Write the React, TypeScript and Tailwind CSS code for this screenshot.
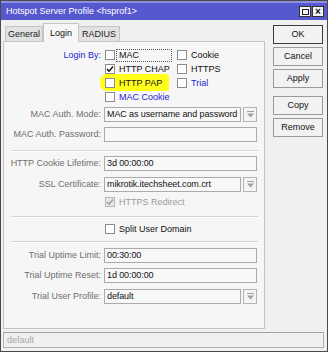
import React from "react";

const font = { fontFamily: '"Liberation Sans", Arial, sans-serif' };

const DropIcon = () => (
  <svg width="7" height="7" viewBox="0 0 7 7">
    <rect x="0" y="0" width="7" height="1" fill="#a0a0a0" />
    <polygon points="0,2.5 7,2.5 3.5,6.5" fill="#a0a0a0" />
  </svg>
);

const Check = ({ color = "#111" }: { color?: string }) => (
  <svg width="8" height="8" viewBox="0 0 8 8">
    <polyline points="1,4 3,6.2 7,1.5" fill="none" stroke={color} strokeWidth="1.4" />
  </svg>
);

const Box = ({ checked, disabled }: { checked?: boolean; disabled?: boolean }) => (
  <span
    className={
      "w-[10px] h-[10px] flex items-center justify-center border shrink-0 " +
      (disabled ? "bg-[#e8e8e8] border-[#b8b8b8]" : "bg-white border-[#8c8c8c]")
    }
  >
    {checked && <Check color={disabled ? "#9a9a9a" : "#111"} />}
  </span>
);

const CheckItem = ({
  label,
  checked,
  blue,
  focus,
}: {
  label: string;
  checked?: boolean;
  blue?: boolean;
  focus?: boolean;
}) => (
  <div className="flex items-center">
    <Box checked={checked} />
    <span
      className={
        "ml-[1px] w-[56px] h-[13px] pl-[2px] flex items-center whitespace-nowrap border " +
        (focus ? "border-dotted border-[#555]" : "border-transparent") +
        (blue ? " text-[#2424d6]" : " text-[#111]")
      }
    >
      {label}
    </span>
  </div>
);

const Field = ({ value, dropdown }: { value?: string; dropdown?: boolean }) => (
  <div className="flex gap-[2px] w-[153px] h-[15px]">
    <div className="flex-1 min-w-0 overflow-hidden whitespace-nowrap border border-[#ababab] bg-[#f8f8f8] px-[2px] tracking-[-0.1px] flex items-center text-[#111]">
      {value}
    </div>
    {dropdown && (
      <div className="w-[14px] border border-[#b4b4b4] bg-[#f4f4f4] flex items-center justify-center">
        <DropIcon />
      </div>
    )}
  </div>
);

const Row = ({
  label,
  value,
  dropdown,
  mt,
}: {
  label: string;
  value?: string;
  dropdown?: boolean;
  mt: string;
}) => (
  <div className={"flex items-center " + mt}>
    <span className="w-[97px] text-right text-[#6e6e6e] whitespace-nowrap">{label}</span>
    <span className="ml-[3px]">
      <Field value={value} dropdown={dropdown} />
    </span>
  </div>
);

const Sep = ({ mt }: { mt: string }) => (
  <div className={"ml-[7px] w-[247px] h-[2px] border-t border-[#d4d4d4] border-b border-b-white " + mt} />
);

const Btn = ({ label, ok, mt }: { label: string; ok?: boolean; mt?: string }) => (
  <div
    className={
      "h-[19px] w-[50px] flex items-center justify-center bg-[#f2f2f2] text-[#111] border " +
      (ok ? "border-[#3c3c3c]" : "border-[#9a9a9a]") +
      " " +
      (mt ?? "")
    }
  >
    {label}
  </div>
);

export default function App() {
  return (
    <div className="w-[330px] h-[352px] bg-white text-[9px] leading-none" style={font}>
      <div className="w-[328px] h-[352px] border border-[#4a4a4a] bg-[#f0f0f0] flex flex-col">
        {/* title bar */}
        <div className="h-[19px] bg-[#5658d0] border-t-2 border-[#8e91e0] flex items-center pl-[5px] pr-[3px] text-white">
          <span className="flex-1">Hotspot Server Profile &lt;hsprof1&gt;</span>
          <div className="flex gap-[1px]">
            <span className="w-[12px] h-[11px] bg-[#f2f2f2] border border-[#333] flex items-center justify-center">
              <span className="w-[7px] h-[6px] border border-[#222]" />
            </span>
            <span className="w-[12px] h-[11px] bg-[#f2f2f2] border border-[#333] flex items-center justify-center text-[#111] font-bold text-[10px]">
              ×
            </span>
          </div>
        </div>

        <div className="flex flex-1 pt-[3px]">
          {/* left: tabs + panel */}
          <div className="ml-[2px] w-[262px] flex flex-col">
            <div className="flex items-end h-[18px] pl-[2px] relative z-10">
              <div className="w-[38px] h-[15px] bg-[#e2e2e2] border border-b-0 border-[#c4c4c4] flex items-center justify-center text-[#222]">
                General
              </div>
              <div className="w-[36px] h-[19px] -mb-[1px] bg-[#f6f6f6] border border-b-0 border-[#c4c4c4] flex items-center justify-center text-[#111]">
                Login
              </div>
              <div className="w-[41px] h-[15px] bg-[#e2e2e2] border border-b-0 border-l-0 border-[#c4c4c4] flex items-center justify-center text-[#222]">
                RADIUS
              </div>
            </div>
            <div className="h-[288px] border border-[#c4c4c4] bg-[#f6f6f6] flex flex-col">
              {/* login by */}
              <div className="flex mt-[6px] relative">
                <span className="w-[97px] text-right text-[#2424d6] h-[14px] flex items-center justify-end">
                  Login By:
                </span>
                <div className="ml-[4px] flex relative">
                  <span className="absolute left-[-5px] top-[26px] w-[69px] h-[17px] bg-[#ffff1a] rounded-l-[7px] rounded-r-[2px]" />
                  <div className="flex flex-col relative">
                    <div className="h-[14px] flex items-center"><CheckItem label="MAC" focus /></div>
                    <div className="h-[14px] flex items-center"><CheckItem label="HTTP CHAP" checked /></div>
                    <div className="h-[14px] flex items-center"><CheckItem label="HTTP PAP" /></div>
                    <div className="h-[14px] flex items-center"><CheckItem label="MAC Cookie" blue /></div>
                  </div>
                  <div className="flex flex-col ml-[5px]">
                    <div className="h-[14px] flex items-center"><CheckItem label="Cookie" /></div>
                    <div className="h-[14px] flex items-center"><CheckItem label="HTTPS" /></div>
                    <div className="h-[14px] flex items-center"><CheckItem label="Trial" blue /></div>
                  </div>
                </div>
              </div>

              <Row label="MAC Auth. Mode:" value="MAC as username and password" dropdown mt="mt-[3px]" />
              <Row label="MAC Auth. Password:" mt="mt-[5px]" />
              <Sep mt="mt-[8px]" />
              <Row label="HTTP Cookie Lifetime:" value="3d 00:00:00" mt="mt-[4px]" />
              <Row label="SSL Certificate:" value="mikrotik.itechsheet.com.crt" dropdown mt="mt-[6px]" />
              <div className="h-[14px] mt-[3px] ml-[101px] flex items-center">
                <Box checked disabled />
                <span className="ml-[4px] text-[#9a9a9a]">HTTPS Redirect</span>
              </div>
              <Sep mt="mt-[7px]" />
              <div className="h-[14px] mt-[4px] ml-[101px] flex items-center">
                <Box />
                <span className="ml-[4px] text-[#111]">Split User Domain</span>
              </div>
              <Sep mt="mt-[5px]" />
              <Row label="Trial Uptime Limit:" value="00:30:00" mt="mt-[5px]" />
              <Row label="Trial Uptime Reset:" value="1d 00:00:00" mt="mt-[5px]" />
              <Row label="Trial User Profile:" value="default" dropdown mt="mt-[6px]" />
            </div>
          </div>

          {/* right: buttons */}
          <div className="ml-[8px] pt-[2px] flex flex-col gap-[3px]">
            <Btn label="OK" ok />
            <Btn label="Cancel" />
            <Btn label="Apply" />
            <Btn label="Copy" mt="mt-[5px]" />
            <Btn label="Remove" />
          </div>
        </div>

        {/* status bar */}
        <div className="mx-[2px] mt-[3px] mb-[3px] w-[321px] h-[16px] border border-[#b0b0b0] border-t-[#a0a0a0] flex items-center pl-[3px] text-[#a8a8a8]">
          default
        </div>
      </div>
    </div>
  );
}
